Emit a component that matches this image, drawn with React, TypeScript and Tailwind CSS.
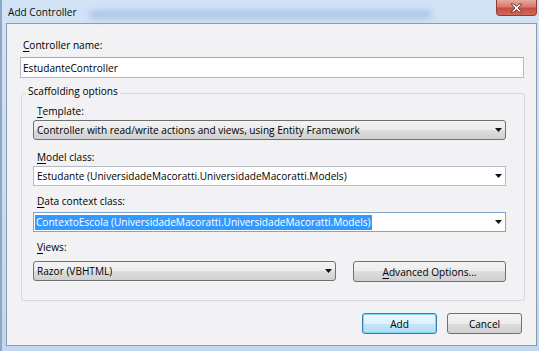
import type { ReactNode } from 'react';

function Arrow() {
  return (
    <svg width="7" height="4" viewBox="0 0 7 4" className="shrink-0">
      <path d="M0 0h7L3.5 4z" fill="#111" />
    </svg>
  );
}

function Label({ k, rest }: { k: string; rest: string }) {
  return (
    <div className="pl-[4px] leading-[14px]">
      <span className="underline underline-offset-[2px] decoration-[1px]">{k}</span>
      {rest}
    </div>
  );
}

function GrayCombo({ children, className = '' }: { children: ReactNode; className?: string }) {
  return (
    <div
      className={`flex h-[20px] items-center justify-between rounded-[3px] border border-[#707070] bg-[linear-gradient(#f3f3f3_0%,#ebebeb_50%,#dddddd_50%,#d0d0d0_100%)] pl-[3px] pr-[3px] ${className}`}
    >
      <span className="truncate leading-[14px]">{children}</span>
      <Arrow />
    </div>
  );
}

function WhiteCombo({ children, focused = false }: { children: ReactNode; focused?: boolean }) {
  return (
    <div
      className={`flex h-[20px] items-center justify-between border bg-white pr-[3px] ${
        focused ? 'border-[#7ea4cf] pl-[1px]' : 'border-[#b4bac3] pl-[3px]'
      }`}
    >
      {children}
      <Arrow />
    </div>
  );
}

export default function App() {
  return (
    <div className="flex h-[351px] w-[539px] flex-col overflow-hidden border-l-2 border-[#8fa6c4] bg-[linear-gradient(#d3e3f6,#c2d7f0)] font-['Open_Sans',sans-serif] text-[10.1px] text-black">
      {/* title bar */}
      <div className="flex h-[23px] shrink-0 items-start">
        <div className="pl-[6px] pt-[5px] leading-[14px] text-[#0b0b0b]">Add Controller</div>
        <div className="ml-[12px] mr-[64px] mt-[10px] h-[9px] flex-1 rounded-full bg-[#a3bde6] opacity-75 blur-[3px]" />
        <div className="mr-[2px] flex h-[16px] w-[41px] items-center justify-center rounded-b-[4px] border border-t-0 border-[#8e3b33] bg-[linear-gradient(#e7a99e_0%,#d9786c_45%,#c74b3f_55%,#d26a5b_100%)]">
          <svg width="13" height="10" viewBox="0 0 13 10">
            <path
              d="M1 1h3l2.5 2.5L9 1h3L8 5l4 4H9L6.5 6.5 4 9H1l4-4z"
              fill="#fff"
              stroke="#5b2520"
              strokeWidth="0.8"
              strokeLinejoin="round"
            />
          </svg>
        </div>
      </div>

      {/* client area */}
      <div className="mb-[5px] ml-[4px] mr-[2px] flex flex-1 flex-col border border-[#8d9aab] bg-[#f2f1f3] pl-[13px] pr-[12px] pt-[14px]">
        <div className="pl-[3px] leading-[14px]">
          <span className="underline underline-offset-[2px]">C</span>ontroller name:
        </div>
        <div className="mt-[5px] flex h-[21px] items-center border border-[#b4bac3] border-t-[#a3a7b0] bg-white pl-[2px]">
          <span className="leading-[14px]">EstudanteController</span>
        </div>

        <fieldset className="ml-[1px] mt-[6px] rounded-[3px] border border-[#d2dae3]">
          <legend className="ml-[4px] px-[2px] pb-[4px] leading-[14px]">Scaffolding options</legend>
          <div className="pl-[11px] pr-[18px] pb-[18px] pt-[2px]">
            <Label k="T" rest="emplate:" />
            <GrayCombo className="mt-[2px]">
              Controller with read/write actions and views, using Entity Framework
            </GrayCombo>

            <div className="mt-[10px]">
              <Label k="M" rest="odel class:" />
            </div>
            <div className="mt-[2px]">
              <WhiteCombo>
                <span className="leading-[14px]">Estudante (UniversidadeMacoratti.UniversidadeMacoratti.Models)</span>
              </WhiteCombo>
            </div>

            <div className="mt-[8px]">
              <Label k="D" rest="ata context class:" />
            </div>
            <div className="mt-[4px]">
              <WhiteCombo focused>
                <span className="bg-[#3399ff] px-[1px] leading-[15px] text-white">
                  ContextoEscola (UniversidadeMacoratti.UniversidadeMacoratti.Models)
                </span>
              </WhiteCombo>
            </div>

            <div className="mt-[8px]">
              <Label k="V" rest="iews:" />
            </div>
            <div className="mt-[7px] flex items-start gap-[17px]">
              <GrayCombo className="w-[303px]">Razor (VBHTML)</GrayCombo>
              <button className="flex h-[21px] w-[153px] items-center justify-center rounded-[3px] border border-[#707070] bg-[linear-gradient(#f3f3f3_0%,#ebebeb_50%,#dddddd_50%,#d0d0d0_100%)] leading-[14px]">
                <span>
                  <span className="underline underline-offset-[2px]">A</span>dvanced Options...
                </span>
              </button>
            </div>
          </div>
        </fieldset>

        <div className="mt-[12px] flex justify-end gap-[10px] pr-[2px]">
          <button className="flex h-[21px] w-[75px] items-center justify-center rounded-[3px] border border-[#3c7fb1] bg-[linear-gradient(#eef7fd_0%,#dff1fc_50%,#c4e5f8_50%,#b4ddf6_100%)] leading-[14px] shadow-[inset_0_0_0_1px_#7fd3f7]">
            Add
          </button>
          <button className="flex h-[21px] w-[75px] items-center justify-center rounded-[3px] border border-[#707070] bg-[linear-gradient(#f3f3f3_0%,#ebebeb_50%,#dddddd_50%,#d0d0d0_100%)] leading-[14px]">
            Cancel
          </button>
        </div>
      </div>
    </div>
  );
}
